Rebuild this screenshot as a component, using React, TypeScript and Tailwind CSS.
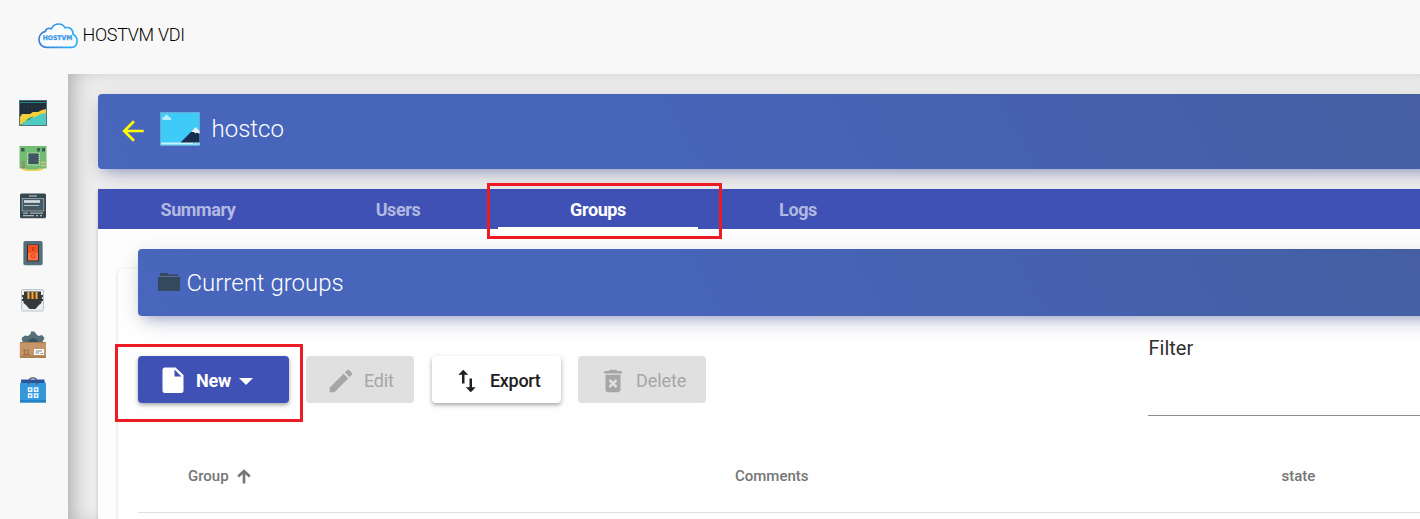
import React from "react";

function CloudLogo() {
  return (
    <svg width="40" height="26" viewBox="0 0 40 26" className="shrink-0">
      <defs>
        <linearGradient id="cloud" x1="0" x2="1">
          <stop offset="0" stopColor="#3f7fd6" />
          <stop offset="1" stopColor="#2fb4fb" />
        </linearGradient>
      </defs>
      <path
        d="M9 24.4C4 24.4 1 21 1 16.5C1 12 4 9 7.5 8.3C7.8 5.8 10 5 13.3 5.7C15 2.6 17.5 1 20.5 1C23.6 1 25.8 2.4 27 4.8C31.5 3.6 35.4 6.3 35 11.2C37.6 12.6 39 14.5 39 18C39 22 37 24.4 33.5 24.4Z"
        fill="#fafcff"
        stroke="url(#cloud)"
        strokeWidth="1.7"
      />
      <text x="4.7" y="17.2" textLength="29.5" lengthAdjust="spacingAndGlyphs" fontSize="6.4" fontWeight="700" fill="#3598e8" stroke="#3598e8" strokeWidth=".25" fontFamily="DejaVu Sans, sans-serif">
        HOSTVM
      </text>
    </svg>
  );
}

const chart = (
  <svg width="28" height="28" viewBox="0 0 28 28">
    <rect x=".5" y="1.5" width="27" height="25" fill="#202d39" stroke="#577080" />
    <path d="M1 3.5H27" stroke="#218a86" />
    <path d="M5 4V26M9 4V26M13 4V20M17 4V18M21 4V16M25 4V14M1 8H27M1 12H27M1 16H16" stroke="#293944" strokeWidth=".6" />
    <path d="M1 18L3 15L11 15L14 13L19 13L23 11L27 10V16L1 26Z" fill="#f5d03b" />
    <path d="M3 26L4 23L8 22L11 19L16 18L22 15L27 14V26Z" fill="#4eccc1" />
    <path d="M6 22L10 19L15 17L10 21Z" fill="#219e79" />
  </svg>
);

const board = (
  <svg width="28" height="28" viewBox="0 0 28 28">
    <path d="M3 24H24V26L20 27H7L3 26Z" fill="#f1d365" />
    <path d="M.5 2H27.5V24.5H20L18 25.5H8L6 24.5H.5Z" fill="#72bd72" />
    <path d="M2 4H5.5V7.5H2ZM18 4H21V7.5H18ZM23 4H26V7.5H23Z" fill="#3c5c5c" />
    <rect x="8.5" y="9" width="12" height="12" fill="none" stroke="#d9e6dc" strokeWidth="1" strokeDasharray="1 1" />
    <rect x="9.5" y="9.5" width="10" height="10.5" fill="#435464" />
    <path d="M2.5 18.5H6M2.5 21.2H6M2.5 23.5H6" stroke="#9b786a" strokeWidth="1.3" />
    <path d="M22 18.5H26.5M22 21.5H26.5" stroke="#e4bd83" strokeWidth="1.5" />
  </svg>
);

const server = (
  <svg width="28" height="28" viewBox="0 0 28 28">
    <rect x="1" y="2" width="26" height="25" rx="1.5" fill="#c9cfd1" />
    <rect x="1" y="1.5" width="26" height="24.5" rx="1.5" fill="#37474f" />
    <path d="M10 4H18" stroke="#9fadb3" strokeWidth="1.4" />
    <rect x="3.2" y="6.5" width="21.6" height="12.5" fill="#455a64" stroke="#a1afb5" strokeWidth=".8" />
    <path d="M5 9.5H21" stroke="#d9e1e4" strokeWidth="2.6" />
    <path d="M5 13.5H20" stroke="#b4c0c5" strokeWidth="1" />
    <path d="M4 21.2H9M11 21.2H24M4 23.7H15M17 23.7H19M21 23.7H23" stroke="#a9b5ba" strokeWidth="1.3" />
  </svg>
);

const powerSwitch = (
  <svg width="28" height="28" viewBox="0 0 28 28">
    <rect x="4" y="2.5" width="20" height="24.5" rx="2" fill="#cfd4d6" />
    <rect x="4.5" y="2" width="19" height="24" rx="1.8" fill="#546e7a" />
    <rect x="8" y="5.5" width="12" height="17" fill="#263238" />
    <rect x="9" y="6" width="10" height="8" fill="#f4511e" />
    <rect x="9" y="14" width="10" height="7.5" fill="#ff7043" />
    <path d="M14 8V12" stroke="#a53622" strokeWidth="1.2" />
    <circle cx="14" cy="17" r="1.8" fill="none" stroke="#d54626" />
  </svg>
);

const network = (
  <svg width="28" height="28" viewBox="0 0 28 28">
    <rect x="2.5" y="2.5" width="22" height="21.5" rx="1.5" fill="#eceff1" stroke="#b8c5ca" />
    <path d="M5 4.5H22V8H24V10H23V12H24V14H22.5V16L20 18L16.5 22H10.5L7 18L4.5 16V14H3V12H4V10H3V8H5Z" fill="#37393a" />
    <path d="M9.5 5V12M13.5 5V12M17.5 5V12" stroke="#f5a638" strokeWidth="2.2" />
  </svg>
);

const packageIcon = (
  <svg width="28" height="28" viewBox="0 0 28 28">
    <path d="M4 12L2.5 7L6 4.5L9 5L11.5 3L12 .5H15.5L17 3L19.5 5L23 4L25.5 7L23 12Z" fill="#546e7a" />
    <path d="M9 12C9 6 19 6 19 12Z" fill="#38515d" />
    <rect x=".8" y="11" width="26.2" height="16" rx="1.3" fill="#c49567" />
    <path d="M1 24.5H27V26Q27 27 26 27H2Q1 27 1 26Z" fill="#ad7f54" />
    <path d="M1 11.5H27" stroke="#aa7c51" />
    <path d="M5.5 23V19M9 23V19M4 20L5.5 18.5L7 20M7.5 20L9 18.5L10.5 20M4 23.5H11" stroke="#9c704a" fill="none" />
    <rect x="15" y="18" width="10" height="6" fill="#fff" />
    <path d="M16.5 20H23M16.5 22H20M21.5 22.5H24" stroke="#7a858a" strokeWidth="1" />
  </svg>
);

const bag = (
  <svg width="28" height="28" viewBox="0 0 28 28">
    <path d="M2 3.5H25.5V9H2Z" fill="#2854a0" />
    <path d="M1 8L3 5V8ZM27 8L25 5V8Z" fill="#2678bd" />
    <path d="M1 7H27V26.5H1Z" fill="#3498db" />
    <path d="M1 24H27V26.5H1Z" fill="#2482c4" />
    <path d="M9.5 8.5V6C10 .5 18 .5 18 6V8.5" stroke="#49566f" strokeWidth="1.2" fill="none" />
    <path d="M9.5 12H12.8V15.3H9.5ZM15.5 12H18.8V15.3H15.5ZM9.5 18H12.8V21.3H9.5ZM15.5 18H18.8V21.3H15.5Z" fill="#43a6e5" stroke="#e7f6ff" strokeWidth="1.4" />
  </svg>
);

function Landscape() {
  return (
    <svg width="40" height="34" viewBox="0 0 40 34" className="ml-[15px] shrink-0">
      <rect x=".5" y=".5" width="39" height="33" fill="#3ecbf8" stroke="#67a8d8" />
      <path d="M3 8H11C12 6 10 5 9 5C8 2 5 2 4.5 5C2 5 1.5 7 3 8Z" fill="#b5ecfb" />
      <path d="M20 31L34 17L39.5 21V31Z" fill="#182e50" />
      <path d="M31 20L35.5 15L39.5 19V22L37 20.5L35.5 21.5L34 20Z" fill="#ecf0f7" />
      <path d="M1 31.5H39.5" stroke="#c9f3fb" strokeWidth="2" />
      <path d="M33 31.2H35M36.5 31.2H38.5" stroke="#3ba4bd" strokeWidth=".8" />
    </svg>
  );
}

function Glyph({ d, size, className = "" }: { d: string; size: number; className?: string }) {
  return (
    <svg width={size} height={size} viewBox="0 0 24 24" fill="currentColor" className={"shrink-0 " + className}>
      <path d={d} />
    </svg>
  );
}

const banner =
  "relative flex shrink-0 items-center rounded-[4px] bg-[linear-gradient(60deg,#4766bc_0%,#4765b9_40%,#4560a9_80%,#455f9f_100%)] text-white shadow-[0_12px_20px_-10px_rgba(63,81,181,0.28),0_4px_20px_0_rgba(0,0,0,0.12),0_7px_8px_-5px_rgba(63,81,181,0.2)]";

const disabled = "flex h-[47px] shrink-0 items-center rounded-[4px] bg-[#e0e0e0] text-[#a6a6a6]";

export default function App() {
  return (
    <div className="relative flex h-[519px] w-[1420px] flex-col overflow-hidden bg-[#f8f8f8] font-[Roboto,sans-serif]">
      <header className="flex h-[74px] shrink-0 items-start pl-[38px] pt-[23px]">
        <CloudLogo />
        <span className="ml-[4.5px] text-[18px] font-light leading-6 tracking-[-0.3px] text-black">HOSTVM VDI</span>
      </header>
      <div className="flex min-h-0 flex-1">
        <nav className="flex w-[68px] shrink-0 flex-col items-start pl-[19px] pt-[25px]">
          <div className="h-[45px]">{chart}</div>
          <div className="h-[48px]">{board}</div>
          <div className="h-[47px]">{server}</div>
          <div className="h-[48px]">{powerSwitch}</div>
          <div className="h-[44px]">{network}</div>
          <div className="h-[45px]">{packageIcon}</div>
          <div>{bag}</div>
        </nav>
        <main className="min-w-0 flex-1 overflow-hidden bg-[#eeeeee] pl-[30px] pt-5 shadow-[inset_14px_16px_24px_-16px_rgba(0,0,0,0.03),inset_14px_0_22px_-10px_rgba(0,0,0,0.28)]">
          <div className={banner + " h-[75px] w-[1400px] pl-[23px]"}>
            <Glyph size={32} className="-ml-1 -mt-0.5 text-[#ffff00]" d="M20 11H7.83l5.59-5.59L12 4l-8 8 8 8 1.41-1.41L7.83 13H20v-2z" />
            <div className="-ml-1 flex items-center pb-[5px]">
              <Landscape />
              <span className="ml-[11.5px] text-[24px] font-light leading-8">hostco</span>
            </div>
          </div>
          <div className="mt-5 w-[1400px] bg-white shadow-[0_2px_4px_rgba(0,0,0,0.2)]">
            <div className="flex h-10 bg-[#3f51b5] text-center text-[18px] font-bold leading-[41px] tracking-[-0.4px] text-[#b2b9e1]">
              <div className="w-[200px]">Summary</div>
              <div className="w-[200px]">Users</div>
              <div className="w-[200px] border-b-2 border-white text-white">Groups</div>
              <div className="w-[200px]">Logs</div>
            </div>
            <div className="bg-[#fdfdfd] pl-5 pt-10">
              <section className="flex h-[300px] flex-col rounded-[6px] bg-[#fefefe] pl-5 shadow-[0_1px_4px_0_rgba(0,0,0,0.14)]">
                <div className={banner + " -mt-5 h-[67px] w-[1360px] pl-5"}>
                  <svg width="22" height="20" viewBox="0 0 22 20" className="shrink-0">
                    <path d="M2 0H9.5L11 1.5H20V4H22V18H0V4H2Z" fill="#34495e" />
                    <path d="M2.5 3.5H19.5" stroke="#5b7293" strokeWidth="1" />
                  </svg>
                  <span className="ml-[6.5px] text-[24px] font-light leading-8">Current groups</span>
                </div>
                <div className="mt-10 flex h-[47px] shrink-0 text-[18px] leading-6 tracking-[-0.2px]">
                  <button className="flex h-[47px] w-[151px] shrink-0 items-center rounded-[4px] bg-[#3f51b5] pl-5 font-bold text-white shadow-[0_2px_4px_rgba(0,0,0,0.35)]">
                    <svg width="30" height="32" viewBox="0 0 30 32" className="shrink-0">
                      <path d="M7 3.5H17.5L25.5 11V26.5Q25.5 29 23 29H7Q4.5 29 4.5 26.5V6Q4.5 3.5 7 3.5ZM16.5 5.5V12.5H23.5Z" fill="white" fillRule="evenodd" />
                    </svg>
                    <span className="ml-2 mt-0.5 tracking-[-0.2px]">New</span>
                    <svg width="14" height="7" viewBox="0 0 14 7" className="ml-2 mt-1"><path d="M0 0H14L7 7Z" fill="white" /></svg>
                  </button>
                  <button className={disabled + " ml-[17px] w-[108px] pl-5 pt-0.5"}>
                    <Glyph size={30} d="M3 17.25V21h3.75L17.81 9.94l-3.75-3.75L3 17.25zM20.71 7.04a1 1 0 0 0 0-1.41l-2.34-2.34a1 1 0 0 0-1.41 0l-1.83 1.83 3.75 3.75 1.83-1.83z" />
                    <span className="ml-2">Edit</span>
                  </button>
                  <button className="ml-[18px] flex h-[47px] w-[129px] shrink-0 items-center rounded-[4px] bg-white pl-5 pt-0.5 font-medium text-[#202020] shadow-[0_2px_4px_rgba(0,0,0,0.35)]">
                    <Glyph size={30} d="M16 17.01V10h-2v7.01h-3L15 21l4-3.99h-3zM9 3L5 6.99h3V14h2V6.99h3L9 3z" />
                    <span className="ml-2 tracking-[-0.3px]">Export</span>
                  </button>
                  <button className={disabled + " ml-[17px] w-[128px] pl-5 pt-0.5"}>
                    <Glyph size={30} d="M6 19c0 1.1.9 2 2 2h8c1.1 0 2-.9 2-2V7H6v12zm2.46-7.12l1.41-1.41L12 12.59l2.12-2.12 1.41 1.41L13.41 14l2.12 2.12-1.41 1.41L12 15.41l-2.12 2.12-1.41-1.41L10.59 14l-2.13-2.12zM15.5 4l-1-1h-5l-1 1H5v2h14V4z" />
                    <span className="ml-2 tracking-[-0.1px]">Delete</span>
                  </button>
                  <label className="-mt-5 ml-[442px] flex h-[80px] w-[400px] shrink-0 flex-col border-b border-[#8d8d8d] pl-[0.5px] text-[20px] leading-6 tracking-normal text-[#303030]">Filter</label>
                </div>
                <div className="mt-[37px] flex h-[73px] w-[1360px] shrink-0 items-center border-b border-[#e0e0e0] pl-[50px] text-[15px] font-medium leading-5 text-[#757575]">
                  <div className="flex w-[547px] items-center">
                    Group
                    <svg width="14" height="15" viewBox="0 0 14 15" className="ml-2">
                      <path d="M7 14.5V2M1.2 7.5L7 2L12.8 7.5" fill="none" stroke="currentColor" strokeWidth="2.6" />
                    </svg>
                  </div>
                  <div className="w-[546.5px]">Comments</div>
                  <div>state</div>
                </div>
              </section>
            </div>
          </div>
        </main>
      </div>
      <div className="pointer-events-none absolute left-[487px] top-[183px] h-[56px] w-[235px] border-[3px] border-[#ed1c24]" />
      <div className="pointer-events-none absolute left-[115px] top-[344px] h-[78px] w-[188px] border-[3px] border-[#ed1c24]" />
    </div>
  );
}
